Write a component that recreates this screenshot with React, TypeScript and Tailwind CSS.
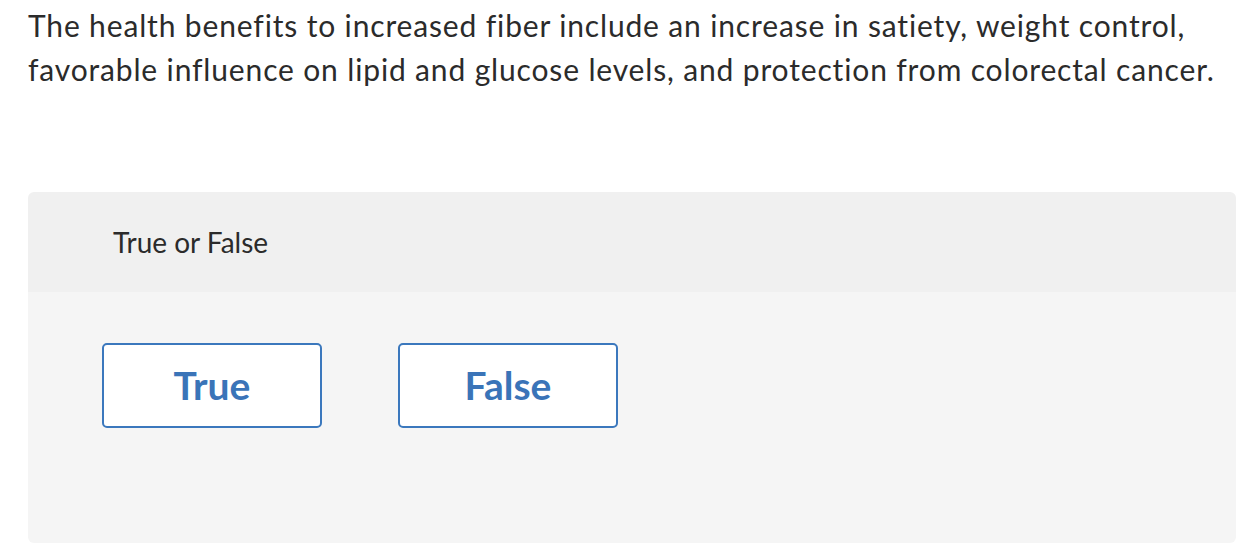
import React from "react";

const App = () => {
  const options = ["True", "False"];

  return (
    <div className="bg-white w-[1254px] h-[559px] px-[28px] pt-[3px] font-['Lato','Open_Sans',sans-serif] text-[#2b2b2b]">
      <p className="text-[30px] leading-[44px] tracking-[0.85px] [font-variant-ligatures:none]">
        The health benefits to increased fiber include an increase in satiety, weight control,
        <br />
        favorable influence on lipid and glucose levels, and protection from colorectal cancer.
      </p>

      <div className="mt-[101px] w-[1208px] rounded-[6px] overflow-hidden">
        <div className="bg-[#f0f0f0] h-[100px] flex items-center pl-[85px]">
          <span className="text-[28px]">True or False</span>
        </div>
        <div className="bg-[#f5f5f5] h-[251px] pt-[51px] pl-[74px] flex gap-[76px] items-start">
          {options.map((o) => (
            <button
              key={o}
              className="w-[220px] h-[85px] bg-white border-2 border-[#3b78bd] rounded-[5px] text-[#3a74b8] text-[39px] font-bold flex items-center justify-center"
            >
              {o}
            </button>
          ))}
        </div>
      </div>
    </div>
  );
};

export default App;
